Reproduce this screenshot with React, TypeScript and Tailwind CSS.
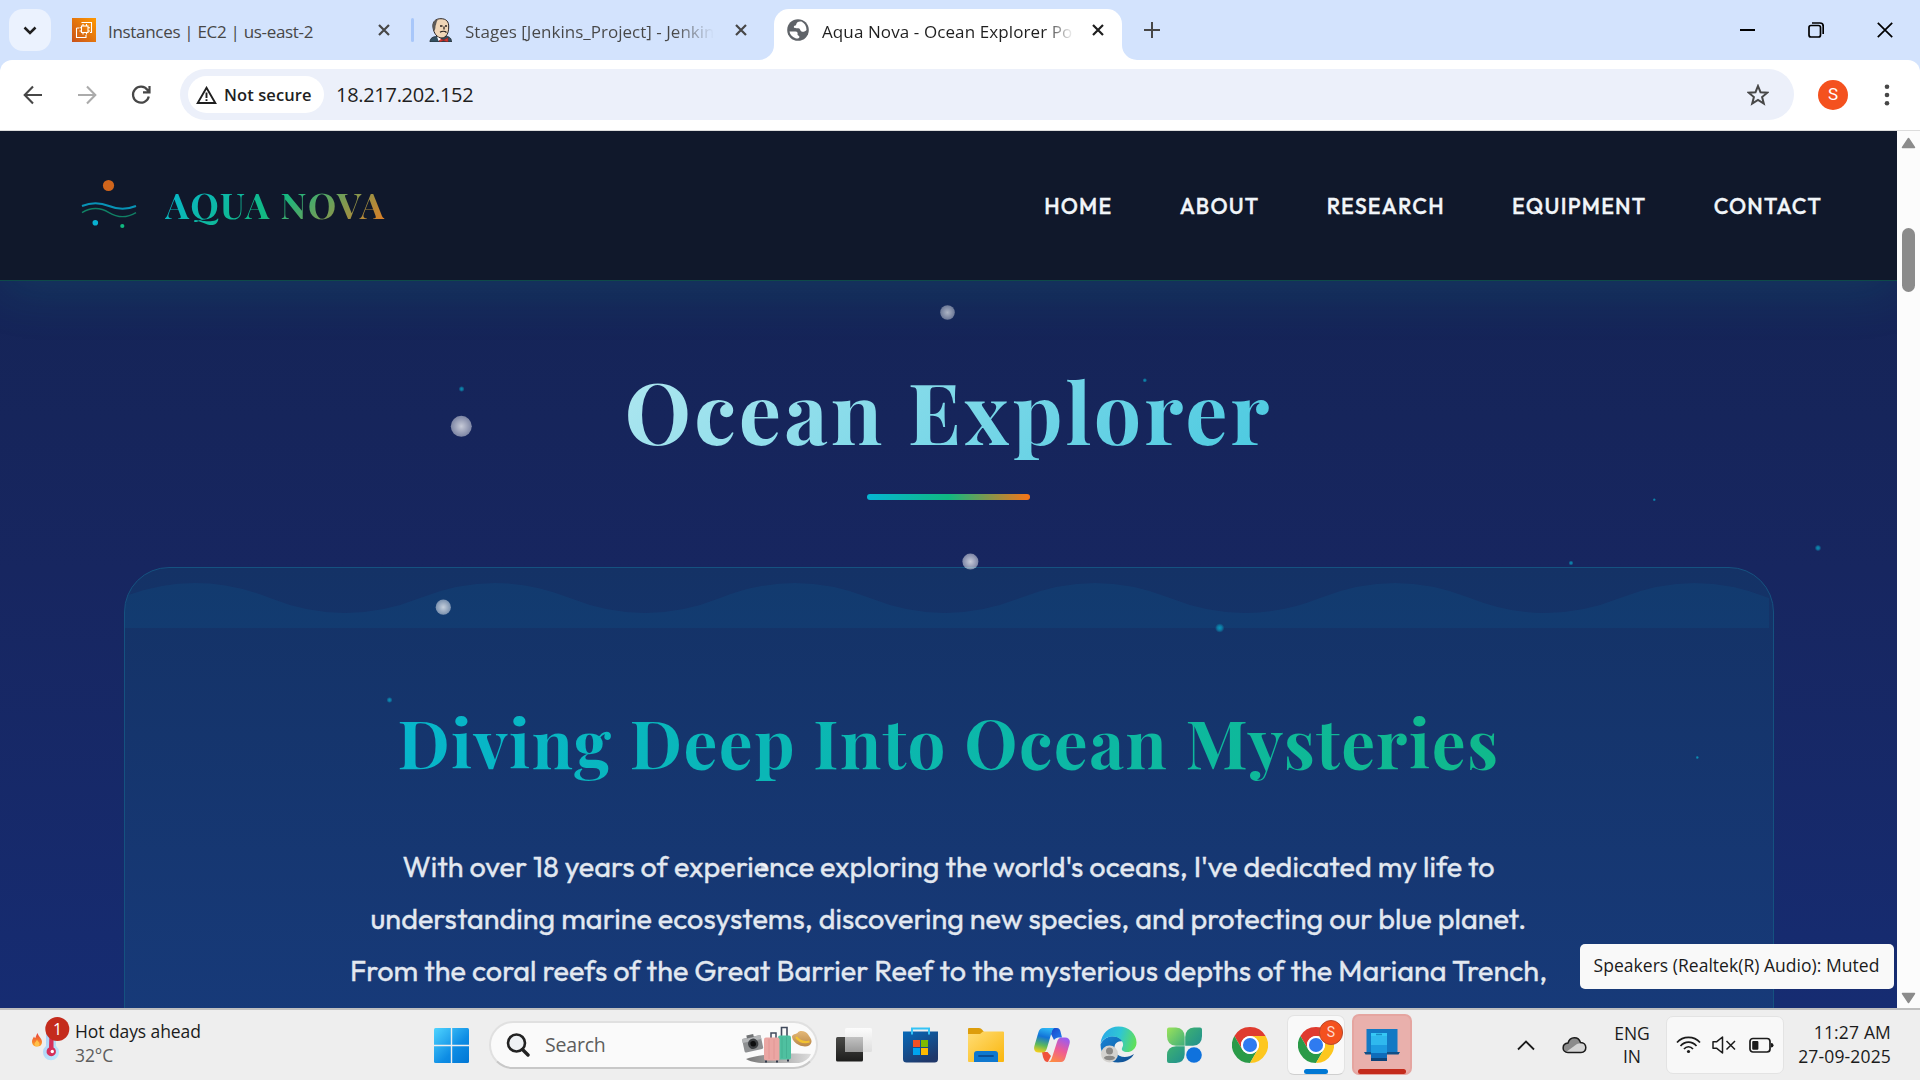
import type { ReactNode } from "react";

const CloseIcon = ({ className = "text-[#474747]" }: { className?: string }) => (
  <svg width="14" height="14" viewBox="0 0 14 14" className={className}>
    <path d="M2 2L12 12M12 2L2 12" stroke="currentColor" strokeWidth="2.2" fill="none" />
  </svg>
);

const Ec2Icon = () => (
  <svg width="24" height="24" viewBox="0 0 24 24">
    <defs>
      <linearGradient id="ec2" x1="0" y1="1" x2="1" y2="0">
        <stop offset="0" stopColor="#c8511b" />
        <stop offset="1" stopColor="#ff9900" />
      </linearGradient>
    </defs>
    <rect width="24" height="24" fill="url(#ec2)" />
    <g fill="none" stroke="#fff" strokeWidth="1.1">
      <path d="M10 5V4.5H19.5V14.5H18M4.5 10H7M4.5 10V19.5H14V17" />
      <rect x="9.5" y="8" width="6.5" height="6.5" />
      <path d="M11 8V6M14.5 8V6M11 14.500V16.500M14.500 14.500V16.500M9.500 9.700H7.500M9.500 13H7.500M16 9.700H18M16 13H18" />
    </g>
  </svg>
);

const JenkinsIcon = () => (
  <svg width="24" height="24" viewBox="0 0 24 24">
    <path d="M1 24C1 20 4 18.500 8 18.500L17 18C21 19 22.500 20.500 22.500 24Z" fill="#335061" stroke="#1f2a30" strokeWidth=".8" />
    <path d="M4 9C3.500 3 7 .7 12 .7C17 .7 20 3.500 19.700 9C19.700 15 17.500 19.500 13 20C8 20 4.500 15 4 9Z" fill="#f0d6b7" stroke="#2b2422" strokeWidth="1" />
    <path d="M4 10C2.500 5 6 1.500 9 1.500C7 4 7.500 6 6.500 8C6.500 10 6 12 5.500 13Z" fill="#5d5a58" />
    <path d="M11 8H13.500M16 8H18M15 8.500V11.500M11 14.300C13 13 16 13 17.500 14.500" stroke="#2b2422" strokeWidth="1.300" fill="none" />
    <path d="M10 20L14.500 22L19 19.700V24L14.500 22.500L10.500 24Z" fill="#d33833" stroke="#8c1c17" strokeWidth=".5" />
    <path d="M8 18.500L12 21L9.500 23Z" fill="#fff" />
  </svg>
);

const GlobeIcon = () => (
  <svg width="22" height="22" viewBox="0 0 22 22">
    <circle cx="11" cy="11" r="10.800" fill="#5f6368" />
    <path d="M2.500 12.500H8.500C10.500 12.500 11 14 10.500 15.200C10.200 16.500 12.500 16.500 12.500 18C12 19.500 10 19.800 8.500 19.200C5 18 3 15.500 2.500 12.500Z" fill="#fff" />
    <path d="M14.500 2.500C11.500 2 9.500 3.200 9.300 5.200C9 7 7 6 6.800 8C7 9.500 9.500 9 11.500 9.200C13.500 9.500 13 11.500 14.500 12.500C16 13.200 18.500 12.500 19.500 11C19.500 7 17.500 4 14.500 2.500Z" fill="#fff" />
  </svg>
);

const TabBar = () => (
  <div className="flex h-[60px] items-center bg-[#d3e3fd]">
    <div className="ml-[9px] flex h-[42px] w-[42px] items-center justify-center rounded-[14px] bg-[#ebf2fe]">
      <svg width="14" height="9" viewBox="0 0 14 9"><path d="M1.500 1.500L7 7L12.500 1.500" stroke="#1f1f1f" strokeWidth="2.500" fill="none" /></svg>
    </div>
    <div className="ml-[21px] flex w-[339px] items-center">
      <Ec2Icon />
      <span className="ml-[12px] pt-[3px] whitespace-nowrap text-[17px] tracking-[-0.31px] text-[#474747]">Instances | EC2 | us-east-2</span>
      <span className="mr-[20px] ml-auto"><CloseIcon /></span>
    </div>
    <div className="h-6 w-[3px] rounded bg-[#a8c7fa]" />
    <div className="flex w-[360px] items-center pl-[15px]">
      <JenkinsIcon />
      <span className="ml-[12px] w-[249px] overflow-hidden pt-[3px] whitespace-nowrap bg-linear-to-r/srgb from-[#474747] from-84% to-transparent bg-clip-text text-[17px] tracking-[0.02px] text-transparent">
        Stages [Jenkins_Project] - Jenkins
      </span>
      <span className="ml-[20px]"><CloseIcon /></span>
    </div>
    <div className="relative flex h-[51px] w-[348px] items-center self-end rounded-t-[15px] bg-white pb-[9px] pl-[13px]">
      <svg className="absolute bottom-0 -left-[15px]" width="15" height="15"><path d="M15 0V15H0A15 15 0 0 0 15 0Z" fill="#fff" /></svg>
      <svg className="absolute -right-[15px] bottom-0" width="15" height="15"><path d="M0 0V15H15A15 15 0 0 1 0 0Z" fill="#fff" /></svg>
      <GlobeIcon />
      <span className="ml-[13px] w-[252px] overflow-hidden pt-[3px] whitespace-nowrap bg-linear-to-r/srgb from-[#1f1f1f] from-88% to-transparent bg-clip-text text-[17px] tracking-[0.1px] text-transparent">
        Aqua Nova - Ocean Explorer Portfolio
      </span>
      <span className="ml-[17px]"><CloseIcon className="text-[#1f1f1f]" /></span>
    </div>
    <svg className="ml-[22px]" width="16" height="16" viewBox="0 0 16 16"><path d="M8 0V16M0 8H16" stroke="#474747" strokeWidth="2" /></svg>
    <div className="mr-[27px] ml-auto flex items-center gap-[53px]">
      <div className="h-[2px] w-[15px] bg-black" />
      <svg width="16" height="16" viewBox="0 0 16 16" fill="none" stroke="#000" strokeWidth="1.700"><rect x="1" y="3.500" width="11.500" height="11.500" rx="2" /><path d="M4 1H12C14 1 15.200 2.200 15.200 4.200V12" /></svg>
      <svg width="16" height="16" viewBox="0 0 16 16"><path d="M.8 .8L15.200 15.200M15.200 .8L.8 15.200" stroke="#000" strokeWidth="1.700" /></svg>
    </div>
  </div>
);

const Toolbar = () => (
  <div className="bg-[#d3e3fd]">
    <div className="flex h-[71px] items-center rounded-t-[12px] border-b border-[#dcdcdc] bg-white pb-[1px]">
      <div className="flex w-[180px] items-center pl-[23px]">
        <svg width="20" height="20" viewBox="0 0 20 20" fill="none" stroke="#474747" strokeWidth="2.100"><path d="M19 10H2M10 1.500L1.700 10L10 18.500" /></svg>
        <svg className="ml-[34px]" width="20" height="20" viewBox="0 0 20 20" fill="none" stroke="#ababab" strokeWidth="2.100"><path d="M1 10H18M10 1.500L18.300 10L10 18.500" /></svg>
        <svg className="ml-[34px]" width="20" height="20" viewBox="0 0 20 20" fill="none" stroke="#474747" strokeWidth="2.200"><path d="M17.800 11.500A8 8 0 1 1 16.500 5L18 7M18.500 1V7.300H12" /></svg>
      </div>
      <div className="flex h-[51px] w-[1614px] items-center rounded-full bg-[#ecf0fa] pl-2 pr-[25px]">
        <div className="flex h-[37px] w-[136px] items-center rounded-full bg-white pl-2">
          <svg width="21" height="18" viewBox="0 0 21 18"><path d="M10.500 1.800L19.300 17H1.700Z" fill="none" stroke="#1f1f1f" strokeWidth="1.900" /><path d="M10.500 6.500V12M10.500 13.200V15" stroke="#1f1f1f" strokeWidth="1.900" /></svg>
          <span className="ml-[7px] pt-px whitespace-nowrap text-[16.5px] font-semibold tracking-[0.1px] text-[#1f1f1f]">Not secure</span>
        </div>
        <span className="ml-[12px] text-[20px] tracking-[-0.3px] text-[#1f1f1f]">18.217.202.152</span>
        <svg className="ml-auto" width="22" height="22" viewBox="0 0 22 22"><path d="M11 2L13.500 8.200L20.300 8.700L15.100 13L16.800 19.600L11 16L5.200 19.600L6.900 13L1.700 8.700L8.500 8.200Z" fill="none" stroke="#474747" strokeWidth="2" /></svg>
      </div>
      <div className="ml-[24px] flex h-[30px] w-[30px] items-center justify-center rounded-full bg-[#f4511e] font-['Roboto'] text-[17px] text-white">S</div>
      <svg className="ml-[36px]" width="6" height="22" viewBox="0 0 6 22" fill="#474747"><circle cx="3" cy="2.700" r="2.300" /><circle cx="3" cy="11" r="2.300" /><circle cx="3" cy="19.300" r="2.300" /></svg>
    </div>
  </div>
);

const SiteLogo = () => (
  <svg width="60" height="60" viewBox="79 176 60 60" fill="none">
    <circle cx="108.500" cy="185.500" r="5.600" fill="#d0651c" />
    <path d="M82 206Q95.500 200.500 109 206T136 206" stroke="#0893b6" strokeWidth="2" />
    <path d="M82 212.600Q95.500 204.500 109 212.600T136 212.600" stroke="#108065" strokeWidth="1.400" />
    <circle cx="95.300" cy="222.700" r="2.800" fill="#08b1d2" />
    <circle cx="122.300" cy="226" r="2.100" fill="#10b981" />
  </svg>
);

const NAV = ["HOME", "ABOUT", "RESEARCH", "EQUIPMENT", "CONTACT"];

const SiteHeader = () => (
  <header className="relative flex h-[150px] items-center border-b border-[#0e4a48] bg-[#10182b] pr-[75px] pl-[79px] shadow-[0_12px_48px_rgba(16,185,150,0.13)]">
    <SiteLogo />
    <div className="mb-[4px] ml-[26px] whitespace-nowrap bg-linear-135/srgb from-[#06b6d4] via-[#12b982] to-[#ea7a20] bg-clip-text font-['Playfair_Display','Liberation_Serif',serif] text-[36px] leading-[48px] font-bold tracking-[1.5px] text-transparent">
      AQUA NOVA
    </div>
    <nav className="ml-auto flex gap-[67.3px] pt-[2px] font-['Outfit','Lato',sans-serif] text-[21.6px] font-medium tracking-[1.2px] text-[#f1f5f9] [-webkit-text-stroke:0.3px_#f1f5f9]">
      {NAV.map((n) => <a key={n}>{n}</a>)}
    </nav>
  </header>
);

const BUBBLES = [
  { x: 947.5, y: 312.5, r: 7.3, o: 0.85 },
  { x: 461.3, y: 426.3, r: 10.5, o: 1 },
  { x: 970.4, y: 561.6, r: 8, o: 1.1 },
  { x: 443.3, y: 607.2, r: 7.6, o: 1 },
];
const PLANKTON = [
  { x: 461.6, y: 389, r: 3 }, { x: 1144.8, y: 380.3, r: 2.3 }, { x: 1219.7, y: 628, r: 4.7 },
  { x: 389.5, y: 700, r: 3 }, { x: 1654.3, y: 499.7, r: 1.7 }, { x: 1818, y: 548, r: 3.3 },
  { x: 1571, y: 563, r: 2.5 }, { x: 1697.3, y: 757.5, r: 1.8 },
];

const Particles = () => (
  <svg className="pointer-events-none absolute inset-0" width="1897" height="877" viewBox="0 131 1897 877">
    <defs>
      <radialGradient id="bub"><stop offset="0" stopColor="#fff" stopOpacity=".76" /><stop offset="1" stopColor="#fff" stopOpacity=".44" /></radialGradient>
      <radialGradient id="plk"><stop offset="0" stopColor="#06b6d4" stopOpacity=".75" /><stop offset=".5" stopColor="#06b6d4" stopOpacity=".5" /><stop offset="1" stopColor="#06b6d4" stopOpacity="0" /></radialGradient>
    </defs>
    {BUBBLES.map((b) => <circle key={b.x} cx={b.x} cy={b.y} r={b.r} fill="url(#bub)" opacity={b.o} />)}
    {PLANKTON.map((b) => <circle key={b.x} cx={b.x} cy={b.y} r={b.r} fill="url(#plk)" />)}
    <circle cx="764" cy="867" r="3.500" fill="url(#bub)" />
  </svg>
);

const Page = () => (
  <main className="relative flex-1 overflow-hidden bg-linear-to-b/srgb from-[#142352] via-[#172660] to-[#162c72]">
    <SiteHeader />
    <section className="flex flex-col items-center">
      <h2 className="mt-[73px] whitespace-nowrap bg-linear-135/srgb from-[#b0e7f0] to-[#49c9e0] bg-clip-text font-['Playfair_Display','Liberation_Serif',serif] text-[84px] leading-[112px] font-bold tracking-[3px] text-transparent">
        Ocean Explorer
      </h2>
      <div className="mt-[28px] h-[6px] w-[163px] rounded-full bg-linear-to-r/srgb from-[#06b6d4] via-[#10b981] to-[#f97316]" />
      <div className="mt-[67px] flex h-[900px] w-[1650px] flex-col items-center overflow-hidden rounded-[45px] border border-[#155280] bg-linear-to-b/srgb from-[#143266] to-[#1a428c]">
        <svg className="block shrink-0 self-start" width="1648" height="60" viewBox="0 0 1648 60">
          <path d="M-5 30Q70 0 145 30T295 30T445 30T595 30T745 30T895 30T1045 30T1195 30T1345 30T1495 30T1644 30V60H-5Z" fill="#06a6d4" opacity=".075" />
        </svg>
        <h3 className="mt-[68px] whitespace-nowrap bg-linear-to-r/srgb from-[#07b6cb] to-[#10b98c] bg-clip-text font-['Playfair_Display','Liberation_Serif',serif] text-[67.2px] leading-[90px] font-bold tracking-[1.5px] text-transparent">
          Diving Deep Into Ocean Mysteries
        </h3>
        <p className="mt-[55px] whitespace-nowrap text-center font-['Outfit','Lato',sans-serif] text-[28.8px] leading-[51.84px] text-[#e2e8f0] [-webkit-text-stroke:0.3px_#e2e8f0]">
          With over 18 years of experience exploring the world's oceans, I've dedicated my life to
          <br />
          understanding marine ecosystems, discovering new species, and protecting our blue planet.
          <br />
          From the coral reefs of the Great Barrier Reef to the mysterious depths of the Mariana Trench,
        </p>
      </div>
    </section>
    <Particles />
    <div className="absolute top-[813px] left-[1580px] flex h-[45px] w-[314px] items-center justify-center rounded-[5px] bg-[#f9f9f9] pr-px pb-[2px] text-[17.5px] tracking-[0.03px] whitespace-nowrap text-[#1b1b1b]">
      Speakers (Realtek(R) Audio): Muted
    </div>
  </main>
);

const Scrollbar = () => (
  <div className="flex w-[23px] flex-col items-center bg-[#fcfcfc]">
    <svg className="mt-[6px]" width="15" height="12" viewBox="0 0 15 12"><path d="M7.500 1.500L13.500 10.500H1.500Z" fill="#8b8b8b" stroke="#8b8b8b" strokeWidth="1.500" strokeLinejoin="round" /></svg>
    <div className="mt-[79px] h-[64px] w-[13px] rounded-full bg-[#8b8b8b]" />
    <svg className="mt-auto mb-[4px]" width="15" height="12" viewBox="0 0 15 12"><path d="M7.500 10.500L13.500 1.500H1.500Z" fill="#8b8b8b" stroke="#8b8b8b" strokeWidth="1.500" strokeLinejoin="round" /></svg>
  </div>
);

const Chrome = () => (
  <svg width="36" height="36" viewBox="0 0 48 48">
    <path d="M24 12L44.785 12A24 24 0 0 0 3.215 12L13.608 30A12 12 0 0 1 24 12Z" fill="#df3b2f" />
    <path d="M13.608 30L3.215 12A24 24 0 0 0 24 48L34.392 30A12 12 0 0 1 13.608 30Z" fill="#2a9a48" />
    <path d="M34.392 30L24 48A24 24 0 0 0 44.785 12L24 12A12 12 0 0 1 34.392 30Z" fill="#fdc71f" />
    <circle cx="24" cy="24" r="12" fill="#fff" />
    <circle cx="24" cy="24" r="9.400" fill="#2f7bf0" />
  </svg>
);

const WeatherIcon = () => (
  <svg width="42" height="48" viewBox="0 0 42 48">
    <defs>
      <linearGradient id="flame" x1="0" y1="0" x2="0" y2="1"><stop offset="0" stopColor="#e8413c" /><stop offset="1" stopColor="#ffa526" /></linearGradient>
      <linearGradient id="glass" x1="0" y1="0" x2="1" y2="1"><stop offset="0" stopColor="#a9cdf5" /><stop offset="1" stopColor="#bfeaff" /></linearGradient>
    </defs>
    <path d="M6.500 17C7.500 21 11 22 11 26C11 29 9 30.500 6 30.500C3 30.500 1 28.500 1 25.500C1 23 2.500 22 3 20.500C3.500 22 4 22 4.300 22C5 20 5.500 19 6.500 17Z" fill="url(#flame)" />
    <path d="M6 23.500C6.500 25.500 8.500 26 8.500 28C8.500 29.500 7.500 30.200 6 30.200C4.500 30.200 3.500 29.500 3.500 28C3.500 26.500 5.500 25.500 6 23.500Z" fill="#ffc04a" />
    <path d="M15 14H25V30A8 8 0 1 1 15 30Z" fill="url(#glass)" />
    <path d="M18.500 16H22.500V31.500A4.700 4.700 0 1 1 18 31.500Z" fill="#d6305a" />
    <circle cx="21.300" cy="35.500" r="1.700" fill="#fff" />
    <circle cx="26.300" cy="13" r="12" fill="#c42b1c" />
  </svg>
);

const WinLogo = () => (
  <svg width="35" height="35" viewBox="0 0 35 35">
    <defs><linearGradient id="win" gradientUnits="userSpaceOnUse" x1="0" y1="0" x2="35" y2="35"><stop offset="0" stopColor="#4fd4ff" /><stop offset=".6" stopColor="#0d8ce4" /><stop offset="1" stopColor="#0076d4" /></linearGradient></defs>
    <g fill="url(#win)">
      <path d="M1.500 0H16.800V16.800H0V1.500Q0 0 1.500 0Z" /><path d="M18.200 0H33.500Q35 0 35 1.500V16.800H18.200Z" />
      <path d="M0 18.200H16.800V35H1.500Q0 35 0 33.500Z" /><path d="M18.200 18.200H35V33.500Q35 35 33.500 35H18.200Z" />
    </g>
  </svg>
);

const TravelArt = () => (
  <svg width="70" height="38" viewBox="0 0 70 38">
    <defs>
      <linearGradient id="floor" x1="0" x2="1"><stop offset="0" stopColor="#777" /><stop offset="1" stopColor="#ddd" /></linearGradient>
      <linearGradient id="hat" x1="0" y1="0" x2="0" y2="1"><stop offset="0" stopColor="#e4b877" /><stop offset="1" stopColor="#b98748" /></linearGradient>
    </defs>
    <path d="M4 33C18 27 50 27 69 28C67 33 62 36 57 37H22C14 37 7 35 4 33Z" fill="url(#floor)" />
    <g transform="rotate(-12 10 17)">
      <rect x="1" y="11" width="19" height="14" rx="1.500" fill="#8e9092" /><rect x="1" y="11" width="19" height="4" fill="#b4b6b8" /><rect x="6" y="8.500" width="7" height="3" fill="#707274" />
      <circle cx="11" cy="18" r="5.200" fill="#3c3f42" /><circle cx="11" cy="18" r="2.800" fill="#0c0d0e" />
    </g>
    <path d="M39.500 10V1.500H45V10" fill="none" stroke="#414a5c" strokeWidth="1.600" />
    <rect x="36" y="9.500" width="13" height="24" rx="2" fill="#4fc0a0" /><path d="M40 11V32M44.500 11V32" stroke="#43ae91" strokeWidth=".8" />
    <path d="M29 12V7H34V12" fill="none" stroke="#414a5c" strokeWidth="1.500" />
    <rect x="22" y="11.500" width="15.500" height="23" rx="2" fill="#eba6a3" /><path d="M27 13V33M32 13V33" stroke="#de9592" strokeWidth=".8" />
    <path d="M24 34.500V36.500M35 34.500V36.500M46 33.500V35.500" stroke="#333d4f" strokeWidth="2" />
    <path d="M50 11C50 8 54 8 55.500 7C57 4 64 4.500 66.500 9C67.500 11 70 13 69.500 16C68.500 21 62 21.500 57 19C53 17 50.500 14.500 50 11Z" fill="url(#hat)" />
    <path d="M54 11C57 15 62 17 67.500 15.500" stroke="#f2c230" strokeWidth="2.300" fill="none" />
  </svg>
);

const TaskView = () => (
  <svg width="36" height="35" viewBox="0 0 36 35">
    <defs>
      <linearGradient id="tvd" x1="0" y1="0" x2="0" y2="1"><stop offset="0" stopColor="#4a4a48" /><stop offset="1" stopColor="#1d1d1c" /></linearGradient>
      <linearGradient id="tvl" x1="0" y1="0" x2="0" y2="1"><stop offset="0" stopColor="#fcfcfc" /><stop offset="1" stopColor="#dedede" /></linearGradient>
      <linearGradient id="tvm" x1="0" y1="0" x2="0" y2="1"><stop offset="0" stopColor="#c2c2c2" /><stop offset="1" stopColor="#999" /></linearGradient>
    </defs>
    <rect x="0" y="10" width="27" height="24.500" rx="1.500" fill="url(#tvd)" />
    <rect x="9" y="1" width="27" height="24" rx="1.500" fill="url(#tvl)" />
    <path d="M9 10H27V25H10Q9 25 9 24Z" fill="url(#tvm)" />
  </svg>
);

const Store = () => (
  <svg width="35" height="36" viewBox="0 0 35 36">
    <defs><linearGradient id="st" x1="0" y1="0" x2=".6" y2="1"><stop offset="0" stopColor="#0669b9" /><stop offset="1" stopColor="#20386a" /></linearGradient></defs>
    <path d="M0 4.500H35V32Q35 35.500 31.500 35.500H3.500Q0 35.500 0 32Z" fill="url(#st)" />
    <path d="M9 7.500V1.500H26V7.500" fill="none" stroke="#35c3f6" strokeWidth="2" />
    <path d="M10 13H17V20H10Z" fill="#f25022" /><path d="M18 13H25V20H18Z" fill="#7fba00" /><path d="M10 21H17V28H10Z" fill="#00a4ef" /><path d="M18 21H25V28H18Z" fill="#ffb900" />
  </svg>
);

const Folder = () => (
  <svg width="36" height="34" viewBox="0 0 36 34">
    <defs><linearGradient id="fo" x1="0" y1="0" x2="1" y2="1"><stop offset="0" stopColor="#ffdd76" /><stop offset="1" stopColor="#fab60c" /></linearGradient></defs>
    <path d="M0 1Q0 0 1 0H11Q13 0 14 1.500L16 4H20V12H0Z" fill="#dd9d0b" />
    <path d="M0 6H12L15 3.500H35Q36 3.500 36 4.500V33Q36 34 35 34H1Q0 34 0 33Z" fill="url(#fo)" />
    <path d="M6 34V26Q6 23 9 23H27Q30 23 30 26V34Z" fill="#0f78cf" /><path d="M11 28H25" stroke="#0b4f96" strokeWidth="1.800" strokeLinecap="round" />
  </svg>
);

const Copilot = () => (
  <svg width="36" height="34" viewBox="0 0 36 34">
    <defs>
      <linearGradient id="cp1" x1=".5" y1="0" x2=".3" y2="1"><stop offset="0" stopColor="#2bb3f3" /><stop offset=".35" stopColor="#1273d8" /><stop offset=".7" stopColor="#5cb85c" /><stop offset="1" stopColor="#f4cf1b" /></linearGradient>
      <linearGradient id="cp2" x1=".7" y1="0" x2=".3" y2="1"><stop offset="0" stopColor="#9a5cf0" /><stop offset=".5" stopColor="#ee5b95" /><stop offset="1" stopColor="#fd8a45" /></linearGradient>
      <linearGradient id="cp3" x1="0" y1="0" x2="1" y2="1"><stop offset="0" stopColor="#1b43c8" /><stop offset="1" stopColor="#1f7ff0" /></linearGradient>
    </defs>
    <path d="M18 0H23C25 0 26 1.500 26.500 3.500L28 9.500C25 9.500 22 9 20 12L17 6Z" fill="url(#cp3)" />
    <path d="M10 24L13.500 24L17 28L14 34C11 34 10 32 9 29L8 24Z" fill="#f0533b" />
    <path d="M9 0H20.500C18.500 1 18 3 17 6.500L13 20C12 23 11 24.500 8 24.500H5C1 24.500 -.7 22 .4 18L4.500 4C5.300 1.500 7 0 9 0Z" fill="url(#cp1)" />
    <path d="M27 34H14.500C16.500 33.500 17.500 31.500 18.500 28L23 14C24 11 25 9.500 28 9.500H31C35 9.500 36.500 12 35.500 16L31.500 29.500C30.700 32.500 29 34 27 34Z" fill="url(#cp2)" />
  </svg>
);

const Edge = () => (
  <svg width="37" height="37" viewBox="0 0 37 37">
    <defs>
      <linearGradient id="e1" x1="0" y1=".4" x2="1" y2=".6"><stop offset="0" stopColor="#2aa9e8" /><stop offset=".5" stopColor="#2fc6d3" /><stop offset="1" stopColor="#62e055" /></linearGradient>
      <linearGradient id="e2" x1="0" y1="0" x2="1" y2="1"><stop offset="0" stopColor="#1686d9" /><stop offset="1" stopColor="#114a8b" /></linearGradient>
    </defs>
    <path d="M18 36.500C8 36.500 .5 29 .5 18.500C5 8 18 8 23 15.500C16 14 12.500 20 15.500 26C18.500 31.500 27 33 34 28C31 33.500 25 36.500 18 36.500Z" fill="url(#e2)" />
    <path d="M.5 18C1.500 7 9 .5 18.500 .5C29 .5 36.500 8 36.500 16.500C36.500 23 31 26.500 26 26C22 25.500 21 23.500 22.500 21C25 17 20 10 12 10.500C6 11 2 14 .5 18Z" fill="url(#e1)" />
    <circle cx="9.500" cy="28" r="8.500" fill="#d4d2cf" /><circle cx="9.500" cy="25" r="3.500" fill="#8a8886" /><path d="M4 32C4 29 15 29 15 32C13.500 35 5.500 35 4 32Z" fill="#8a8886" />
  </svg>
);

const Clover = () => (
  <svg width="35" height="36" viewBox="0 0 35 36">
    <defs>
      <linearGradient id="c1" x1="0" y1="0" x2="1" y2="1"><stop offset="0" stopColor="#9be35a" /><stop offset="1" stopColor="#3fae7b" /></linearGradient>
      <linearGradient id="c2" x1="0" y1="0" x2="1" y2="1"><stop offset="0" stopColor="#3fb271" /><stop offset="1" stopColor="#1f8f8f" /></linearGradient>
    </defs>
    <path d="M2 .5H9Q17.500 1 17.700 10V18.800H9Q0 18 0 9V2.500Q0 .5 2 .5Z" fill="url(#c1)" />
    <path d="M33 .5H27Q18.500 1 18.200 10V18.800H26Q35 18 35 9V2.500Q35 .5 33 .5Z" fill="url(#c2)" />
    <path d="M2 36H9Q17.500 35.500 17.700 27V19.200H9Q0 20 0 28V34Q0 36 2 36Z" fill="url(#c2)" />
    <circle cx="27" cy="28" r="7.800" fill="#0f72dd" />
  </svg>
);

const PhoneLink = () => (
  <svg width="36" height="34" viewBox="0 0 36 34">
    <path d="M2.500 1H33.500V24H2.500Z" fill="#1379c4" /><path d="M0 24H36L34.500 26.500H1.500Z" fill="#114f86" />
    <path d="M7 5H23V13H7Z" fill="#35c8f5" /><path d="M7 8H23V17H7Z" fill="#2fb9ee" /><path d="M7 17H23V25H7Z" fill="#1d9be0" /><path d="M7 25H23V31H7Z" fill="#0f6cba" /><path d="M7 30H23V33H7Z" fill="#0c437a" /><path d="M12 6.500H18" stroke="#1a8cc4" strokeWidth="1.500" />
  </svg>
);

const Slot = ({ children }: { children: ReactNode }) => (
  <div className="flex h-full w-[66px] items-center justify-center pb-px">{children}</div>
);

const Taskbar = () => (
  <footer className="flex h-[72px] items-center border-t-2 border-[#bfbfbf] bg-[#eeeeee] text-[#1b1b1b]">
    <div className="flex h-full w-[434px] pl-[31px]">
      <div className="relative h-[48px] w-[44px] pt-[6px]">
        <WeatherIcon />
        <span className="absolute top-[8px] left-[22px] text-[16px] leading-[22px] text-white">1</span>
      </div>
      <div className="pt-[9px] text-[17.5px] leading-[24px] tracking-[-0.08px]">
        <div>Hot days ahead</div>
        <div className="text-[#5d5d5d]">32°C</div>
      </div>
    </div>
    <WinLogo />
    <div className="mr-[3px] ml-[20px] flex h-[48px] w-[329px] items-center rounded-full border-2 border-[#e0e0e0] border-b-[#c8c8c8] bg-[#fafafa] pl-[15px]">
      <svg width="24" height="24" viewBox="0 0 24 24" fill="none" stroke="#222" strokeWidth="2.600"><circle cx="10.500" cy="10" r="8.500" fill="#eef1f4" /><path d="M16.500 16.500L22 22" strokeWidth="3.400" strokeLinecap="round" /></svg>
      <span className="ml-[15px] text-[19.500px] tracking-[-0.2px] text-[#5d5d5d]">Search</span>
      <span className="mr-[4px] ml-auto"><TravelArt /></span>
    </div>
    <Slot><TaskView /></Slot>
    <Slot><Store /></Slot>
    <Slot><Folder /></Slot>
    <Slot><Copilot /></Slot>
    <Slot><Edge /></Slot>
    <Slot><Clover /></Slot>
    <Slot><Chrome /></Slot>
    <Slot>
      <div className="relative flex h-[60px] w-[58px] items-center justify-center rounded-[7px] border border-[#e3e3e3] border-b-[#cfcfcf] bg-[#f9f9f9]">
        <Chrome />
        <span className="absolute top-[4px] right-[1px] flex h-[25px] w-[24px] items-center justify-center rounded-full border border-[#b8492c] bg-[#f4511e] font-['Roboto'] text-[14px] text-[#ffd9cc]">S</span>
        <span className="absolute bottom-0 h-[5px] w-6 rounded-full bg-[#0078d4]" />
      </div>
    </Slot>
    <Slot>
      <div className="relative flex h-[61px] w-[60px] items-center justify-center rounded-[7px] border-2 border-[#e5a5a0] bg-[#e9b0ac]">
        <PhoneLink />
        <span className="absolute -bottom-px h-[5px] w-12 rounded-full bg-[#c42b1c]" />
      </div>
    </Slot>
    <div className="ml-auto flex items-center pr-[29px] text-[17.5px]">
      <svg width="18" height="11" viewBox="0 0 18 11"><path d="M1 9.500L9 1.500L17 9.500" fill="none" stroke="#1b1b1b" strokeWidth="1.800" /></svg>
      <svg className="ml-[27px]" width="25" height="18" viewBox="0 0 25 18">
        <path d="M6 16.500C-.5 16.500 -.5 7.500 6 7C8 0 16.500 0 18.500 6.500C25.500 6.500 25.500 16.500 19 16.500Z" fill="#8b8b8b" />
        <path d="M4 16L15 8C23 5 25 12 23 15L19 16.500H6Z" fill="#d4d4d4" />
        <path d="M6 16.500C-.5 16.500 -.5 7.500 6 7C8 0 16.500 0 18.500 6.500C25.500 6.500 25.500 16.500 19 16.500Z" fill="none" stroke="#1b1b1b" strokeWidth="1.500" />
      </svg>
      <div className="ml-[26px] w-[38px] pb-px text-center leading-[23px]">ENG<br />IN</div>
      <div className="ml-[15px] flex h-[58px] w-[118px] items-center rounded-[7px] border border-[#e3e3e3] bg-[#f8f8f8] pl-[9px]">
        <svg width="25" height="18" viewBox="0 0 25 18" fill="none" stroke="#1b1b1b" strokeWidth="1.700"><path d="M1 6.500C7 -.3 18 -.3 24 6.500M4.500 10C9 4.800 16 4.800 20.500 10M8 13C10.500 10 14.500 10 17 13" /><circle cx="12.500" cy="15.500" r="1.600" fill="#1b1b1b" stroke="none" /></svg>
        <svg className="ml-[11px]" width="25" height="18" viewBox="0 0 25 18" fill="none" stroke="#1b1b1b" strokeWidth="1.500"><path d="M1 5.800H4.500L10.500 1V17L4.500 12.200H1Z" strokeLinejoin="round" /><path d="M14.500 5L23 13.500M23 5L14.500 13.500" /></svg>
        <svg className="ml-[12px]" width="25" height="17" viewBox="0 0 25 17"><rect x="1" y="1.500" width="20" height="13.500" rx="3" fill="none" stroke="#1b1b1b" strokeWidth="1.700" /><rect x="3.200" y="4" width="6.200" height="8.700" rx="1" fill="#1b1b1b" /><path d="M22 6Q24.500 6 24.500 8.300Q24.500 10.500 22 10.500Z" fill="#1b1b1b" /></svg>
      </div>
      <div className="w-[107px] pb-[3px] text-right leading-[24px] tracking-[0.15px]">11:27 AM<br />27-09-2025</div>
    </div>
  </footer>
);

export default function App() {
  return (
    <div className="flex h-[1080px] w-[1920px] flex-col overflow-hidden bg-white font-['Open_Sans','Noto_Sans',sans-serif]">
      <TabBar />
      <Toolbar />
      <div className="flex h-[877px]">
        <Page />
        <Scrollbar />
      </div>
      <Taskbar />
    </div>
  );
}
